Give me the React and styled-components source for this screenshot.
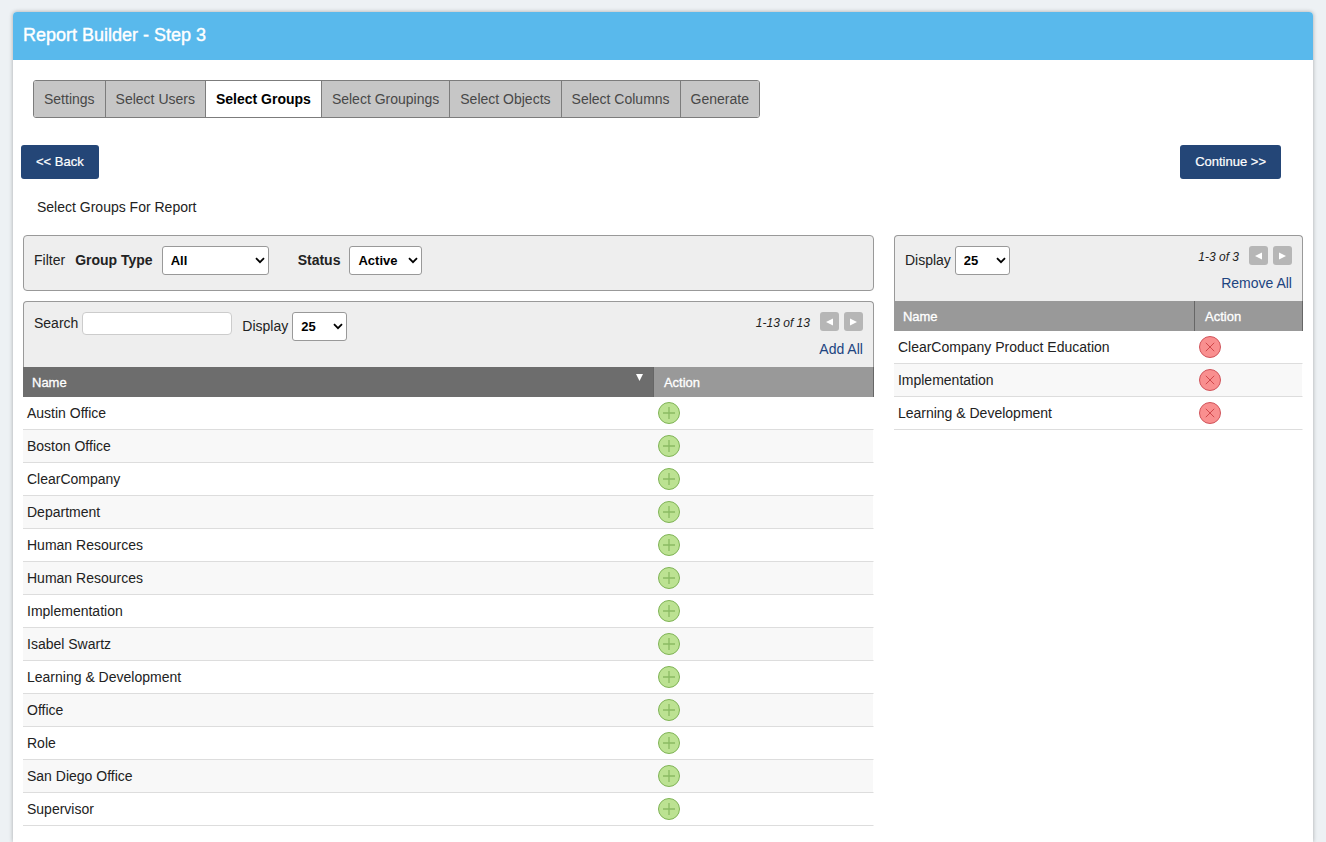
import { useState } from 'react';
import styled, { createGlobalStyle } from 'styled-components';

const GlobalStyle = createGlobalStyle`
  * {
    box-sizing: border-box;
  }

  body {
    margin: 0;
    background: #edf1f4;
    color: #222;
    font-family: "Liberation Sans", Arial, sans-serif;
    font-size: 14px;
    line-height: 20px;
  }

  button, input, select {
    font-family: inherit;
  }
`;

const Page = styled.div`
  display: flex;
  flex-direction: column;
  min-height: 100vh;
  padding: 12px 13px 0;
`;

const Card = styled.main`
  flex: 1;
  background: #fff;
  border-radius: 4px 4px 0 0;
  box-shadow: 0 0 4px rgba(0, 0, 0, 0.3);
`;

const CardHeader = styled.header`
  height: 48px;
  padding: 11px 10px;
  background: #59b9ec;
  border-radius: 4px 4px 0 0;
`;

const Title = styled.h1`
  margin: 0;
  color: #fff;
  font-size: 18px;
  font-weight: normal;
  line-height: 24px;
  -webkit-text-stroke: 0.4px #fff;
`;

const Tabs = styled.nav`
  display: flex;
  width: fit-content;
  margin: 20px 20px 0;
  border: 1px solid #7c7c7c;
  border-radius: 3px;
  overflow: hidden;
`;

const Tab = styled.a`
  padding: 8px 10px;
  background: ${(props) => (props.$active ? '#fff' : '#c6c6c6')};
  color: ${(props) => (props.$active ? '#000' : '#484848')};
  font-weight: ${(props) => (props.$active ? 'bold' : 'normal')};
  text-decoration: none;

  & + & {
    border-left: 1px solid #7c7c7c;
  }
`;

const ButtonRow = styled.div`
  display: flex;
  justify-content: space-between;
  margin: 27px 32px 0 8px;
`;

const NavButton = styled.button`
  height: 34px;
  padding: 0 15px 2px;
  border: none;
  border-radius: 3px;
  background: #244677;
  color: #fff;
  font-size: 13px;
  -webkit-text-stroke: 0.2px #fff;
  cursor: pointer;
`;

const SectionLabel = styled.p`
  margin: 18px 24px;
`;

const Columns = styled.div`
  display: grid;
  grid-template-columns: minmax(0, 2.08fr) minmax(0, 1fr);
  gap: 20px;
  align-items: start;
  padding: 0 10px;
`;

const FilterBar = styled.div`
  display: flex;
  align-items: flex-start;
  height: 56px;
  margin-bottom: 10px;
  padding: 10px;
  border: 1px solid #999;
  border-radius: 4px;
  background: #eee;
`;

const FilterTitle = styled.span`
  margin-right: 10px;
  line-height: 28px;
`;

const FilterField = styled.label`
  display: flex;
  align-items: center;
  gap: 9px;
  margin-right: 29px;
  font-weight: bold;
  line-height: 21px;
`;

const ListToolbar = styled.div`
  display: flex;
  justify-content: space-between;
  height: 66px;
  padding: 10px 10px 0;
  border: 1px solid #999;
  border-bottom: none;
  border-radius: 4px 4px 0 0;
  background: #eee;
`;

const ToolbarFields = styled.div`
  display: flex;
  align-items: flex-start;
  gap: 10px;
`;

const ToolbarField = styled.label`
  display: flex;
  align-items: center;
  gap: 4px;
  line-height: 21px;
`;

const SearchInput = styled.input`
  width: 150px;
  height: 23px;
  padding: 0 6px;
  border: 1px solid #ccc;
  border-radius: 4px;
  background: #fff;
`;

const SelectWrap = styled.span`
  position: relative;
  display: block;
  width: ${(props) => props.$width}px;

  svg {
    position: absolute;
    top: 11px;
    right: 4px;
    pointer-events: none;
  }
`;

const StyledSelect = styled.select`
  display: block;
  width: 100%;
  height: 29px;
  padding: 0 9px 0 8px;
  border: 1px solid #999;
  border-radius: 3px;
  background: #fff;
  color: #000;
  font-size: 13px;
  font-weight: bold;
  appearance: none;
`;

const ToolbarSide = styled.div`
  display: flex;
  flex-direction: column;
  align-items: flex-end;
  gap: 8px;
`;

const Pager = styled.div`
  display: flex;
  align-items: center;
  gap: 5px;
  height: 19px;
`;

const PagerText = styled.span`
  margin-right: 5px;
  padding-top: 3px;
  font-size: 12px;
  font-style: italic;
  line-height: 18px;
`;

const PagerButton = styled.button`
  display: flex;
  align-items: center;
  justify-content: center;
  width: 19px;
  height: 19px;
  padding: 0;
  border: none;
  border-radius: 3px;
  background: #b6b6b6;
  cursor: pointer;
`;

const BulkLink = styled.a`
  color: #204480;
  text-decoration: none;
`;

const Table = styled.table`
  width: 100%;
  border-spacing: 0;
  table-layout: fixed;
`;

const HeadCell = styled.th`
  width: ${(props) => props.$width || 'auto'};
  height: 30px;
  padding: 2px 10px 0 ${(props) => (props.$action ? '10px' : '9px')};
  border-right: 1px solid #666;
  background: ${(props) => (props.$sorted ? '#6d6d6d' : '#999')};
  color: #fff;
  font-size: 13px;
  font-weight: normal;
  text-align: left;
  -webkit-text-stroke: 0.3px #fff;
`;

const HeadContent = styled.span`
  display: flex;
  justify-content: space-between;
  line-height: 20px;
`;

const Row = styled.tr`
  background: ${(props) => (props.$striped ? '#f8f8f8' : '#fff')};
`;

const Cell = styled.td`
  height: 33px;
  padding: 0 4px;
  border-bottom: 1px solid #ddd;

  &:last-child {
    border-right: 1px solid #fff;
  }
`;

const IconButton = styled.button`
  display: block;
  width: 22px;
  height: 22px;
  padding: 0;
  border: none;
  background: none;
  cursor: pointer;
`;

const tabs = [
  'Settings',
  'Select Users',
  'Select Groups',
  'Select Groupings',
  'Select Objects',
  'Select Columns',
  'Generate',
];

const availableGroups = [
  'Austin Office',
  'Boston Office',
  'ClearCompany',
  'Department',
  'Human Resources',
  'Human Resources',
  'Implementation',
  'Isabel Swartz',
  'Learning & Development',
  'Office',
  'Role',
  'San Diego Office',
  'Supervisor',
];

const selectedGroups = ['ClearCompany Product Education', 'Implementation', 'Learning & Development'];

const AddIcon = () => (
  <svg width="22" height="22" viewBox="0 0 22 22" display="block">
    <circle cx="11" cy="11" r="10.5" fill="#bce292" stroke="#7fb356" strokeWidth="1" />
    <path d="M11 5v12M5 11h12" stroke="#8abb63" strokeWidth="1.3" />
  </svg>
);

const RemoveIcon = () => (
  <svg width="22" height="22" viewBox="0 0 22 22" display="block">
    <circle cx="11" cy="11" r="10.5" fill="#f98f8f" stroke="#d0535a" strokeWidth="1" />
    <path d="M6.8 6.8l8.4 8.4M15.2 6.8l-8.4 8.4" stroke="#d0484c" strokeWidth="1" />
  </svg>
);

const Select = ({ width, options }) => {
  const [value, setValue] = useState(options[0]);

  return (
    <SelectWrap $width={width}>
      <StyledSelect value={value} onChange={(e) => setValue(e.target.value)}>
        {options.map((option) => (
          <option key={option}>{option}</option>
        ))}
      </StyledSelect>
      <svg width="10" height="7" viewBox="0 0 10 7">
        <path d="M1 1.2l4 4 4-4" fill="none" stroke="#000" strokeWidth="1.8" />
      </svg>
    </SelectWrap>
  );
};

const Paging = ({ text }) => (
  <Pager>
    <PagerText>{text}</PagerText>
    <PagerButton type="button" aria-label="Previous page">
      <svg width="7" height="8" viewBox="0 0 7 8">
        <path d="M7 0.5v7L0 4z" fill="#fff" />
      </svg>
    </PagerButton>
    <PagerButton type="button" aria-label="Next page">
      <svg width="7" height="8" viewBox="0 0 7 8">
        <path d="M0 0.5v7L7 4z" fill="#fff" />
      </svg>
    </PagerButton>
  </Pager>
);

const GroupTable = ({ groups, sorted, actionWidth, actionLabel, icon }) => (
  <Table>
    <thead>
      <tr>
        <HeadCell $sorted={sorted}>
          <HeadContent>
            Name
            {sorted && (
              <svg width="7" height="8" viewBox="0 0 7 8">
                <path d="M0 1h7L3.5 8z" fill="#fff" />
              </svg>
            )}
          </HeadContent>
        </HeadCell>
        <HeadCell $action $width={actionWidth}>Action</HeadCell>
      </tr>
    </thead>
    <tbody>
      {groups.map((group, index) => (
        <Row key={index} $striped={index % 2 === 1}>
          <Cell>{group}</Cell>
          <Cell>
            <IconButton type="button" aria-label={`${actionLabel} ${group}`}>
              {icon}
            </IconButton>
          </Cell>
        </Row>
      ))}
    </tbody>
  </Table>
);

const App = () => {
  const [search, setSearch] = useState('');

  return (
    <Page>
      <GlobalStyle />
      <Card>
        <CardHeader>
          <Title>Report Builder - Step 3</Title>
        </CardHeader>

        <Tabs>
          {tabs.map((tab) => (
            <Tab key={tab} href="#" $active={tab === 'Select Groups'}>{tab}</Tab>
          ))}
        </Tabs>

        <ButtonRow>
          <NavButton type="button">&lt;&lt; Back</NavButton>
          <NavButton type="button">Continue &gt;&gt;</NavButton>
        </ButtonRow>

        <SectionLabel>Select Groups For Report</SectionLabel>

        <Columns>
          <section>
            <FilterBar>
              <FilterTitle>Filter</FilterTitle>
              <FilterField>
                Group Type
                <Select width={107} options={['All', 'Department', 'Office', 'Role']} />
              </FilterField>
              <FilterField>
                Status
                <Select width={73} options={['Active', 'Inactive']} />
              </FilterField>
            </FilterBar>

            <ListToolbar>
              <ToolbarFields>
                <ToolbarField>
                  Search
                  <SearchInput type="text" value={search} onChange={(e) => setSearch(e.target.value)} />
                </ToolbarField>
                <ToolbarField>
                  Display
                  <Select width={55} options={['25', '50', '100']} />
                </ToolbarField>
              </ToolbarFields>
              <ToolbarSide>
                <Paging text="1-13 of 13" />
                <BulkLink href="#">Add All</BulkLink>
              </ToolbarSide>
            </ListToolbar>
            <GroupTable groups={availableGroups} sorted actionWidth="220px" actionLabel="Add" icon={<AddIcon />} />
          </section>

          <section>
            <ListToolbar>
              <ToolbarFields>
                <ToolbarField>
                  Display
                  <Select width={55} options={['25', '50', '100']} />
                </ToolbarField>
              </ToolbarFields>
              <ToolbarSide>
                <Paging text="1-3 of 3" />
                <BulkLink href="#">Remove All</BulkLink>
              </ToolbarSide>
            </ListToolbar>
            <GroupTable groups={selectedGroups} actionWidth="108px" actionLabel="Remove" icon={<RemoveIcon />} />
          </section>
        </Columns>
      </Card>
    </Page>
  );
};

export default App;
